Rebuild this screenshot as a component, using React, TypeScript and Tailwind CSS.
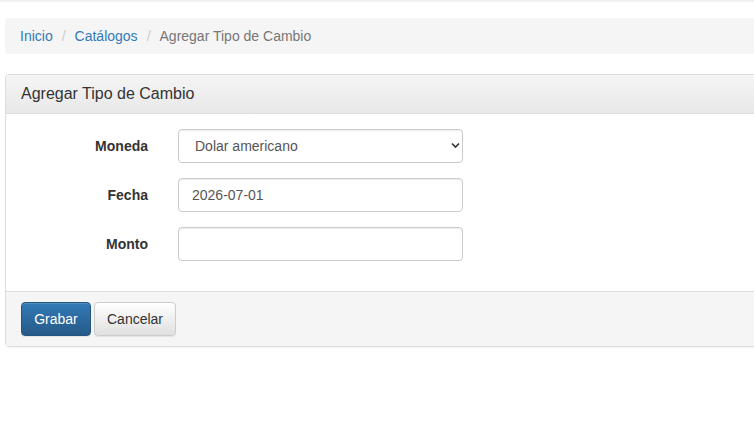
const fields = ["Moneda", "Fecha", "Monto"];

const App = () => {
  return (
    <div className="w-[754px] h-[428px] overflow-hidden bg-white font-['Liberation_Sans',Arial,sans-serif] text-[14px] text-[#333]">
      <div className="h-[3px] bg-gradient-to-b from-[#ececec] to-white" />
      <div className="pt-[15px] pl-[5px] w-[820px]">
        <ol className="flex items-center h-[36px] px-[15px] rounded-[4px] bg-[#f5f5f5] leading-[20px]">
          <li><a className="text-[#337ab7]">Inicio</a></li>
          <li className="px-[9px] text-[#ccc]">/</li>
          <li><a className="text-[#337ab7]">Catálogos</a></li>
          <li className="px-[9px] text-[#ccc]">/</li>
          <li className="text-[#777]">Agregar Tipo de Cambio</li>
        </ol>

        <div className="mt-[20px] border border-[#ddd] rounded-[4px] shadow-[0_1px_1px_rgba(0,0,0,0.05)]">
          <div className="h-[39px] flex items-center px-[15px] border-b border-[#ddd] rounded-t-[3px] bg-gradient-to-b from-[#f5f5f5] to-[#e8e8e8]">
            <h3 className="text-[16px] text-[#333] leading-[18px]">Agregar Tipo de Cambio</h3>
          </div>

          <div className="p-[15px] flex flex-col gap-[15px] pb-[30px]">
            {fields.map((f) => (
              <div key={f} className="flex items-center">
                <label className="w-[127px] text-right font-bold text-[#333]">{f}</label>
                <div className="ml-[30px] w-[285px] h-[34px] relative">
                  {f === "Moneda" ? (
                    <>
                      <div className="h-full flex items-center pl-[16px] border border-[#ccc] rounded-[4px] text-[#555] shadow-[inset_0_1px_1px_rgba(0,0,0,0.075)]">
                        Dolar americano
                      </div>
                      <svg className="absolute right-[3px] top-[13px]" width="9" height="7" viewBox="0 0 9 7">
                        <path d="M1 1.5 L4.5 5 L8 1.5" fill="none" stroke="#333" strokeWidth="1.6" />
                      </svg>
                    </>
                  ) : (
                    <div className="h-full flex items-center pl-[13px] border border-[#ccc] rounded-[4px] text-[#555] shadow-[inset_0_1px_1px_rgba(0,0,0,0.075)]">
                      {f === "Fecha" ? "2026-07-01" : ""}
                    </div>
                  )}
                </div>
              </div>
            ))}
          </div>

          <div className="flex gap-[3px] px-[15px] py-[10px] bg-[#f5f5f5] border-t border-[#ddd] rounded-b-[3px]">
            <button className="h-[34px] w-[70px] rounded-[4px] border border-[#245580] bg-gradient-to-b from-[#337ab7] to-[#265a88] text-white shadow-[inset_0_1px_0_rgba(255,255,255,0.15),0_1px_1px_rgba(0,0,0,0.075)]">
              Grabar
            </button>
            <button className="h-[34px] w-[82px] rounded-[4px] border border-[#ccc] bg-gradient-to-b from-white to-[#e0e0e0] text-[#333] shadow-[inset_0_1px_0_rgba(255,255,255,0.15),0_1px_1px_rgba(0,0,0,0.075)]">
              Cancelar
            </button>
          </div>
        </div>
      </div>
    </div>
  );
};

export default App;
